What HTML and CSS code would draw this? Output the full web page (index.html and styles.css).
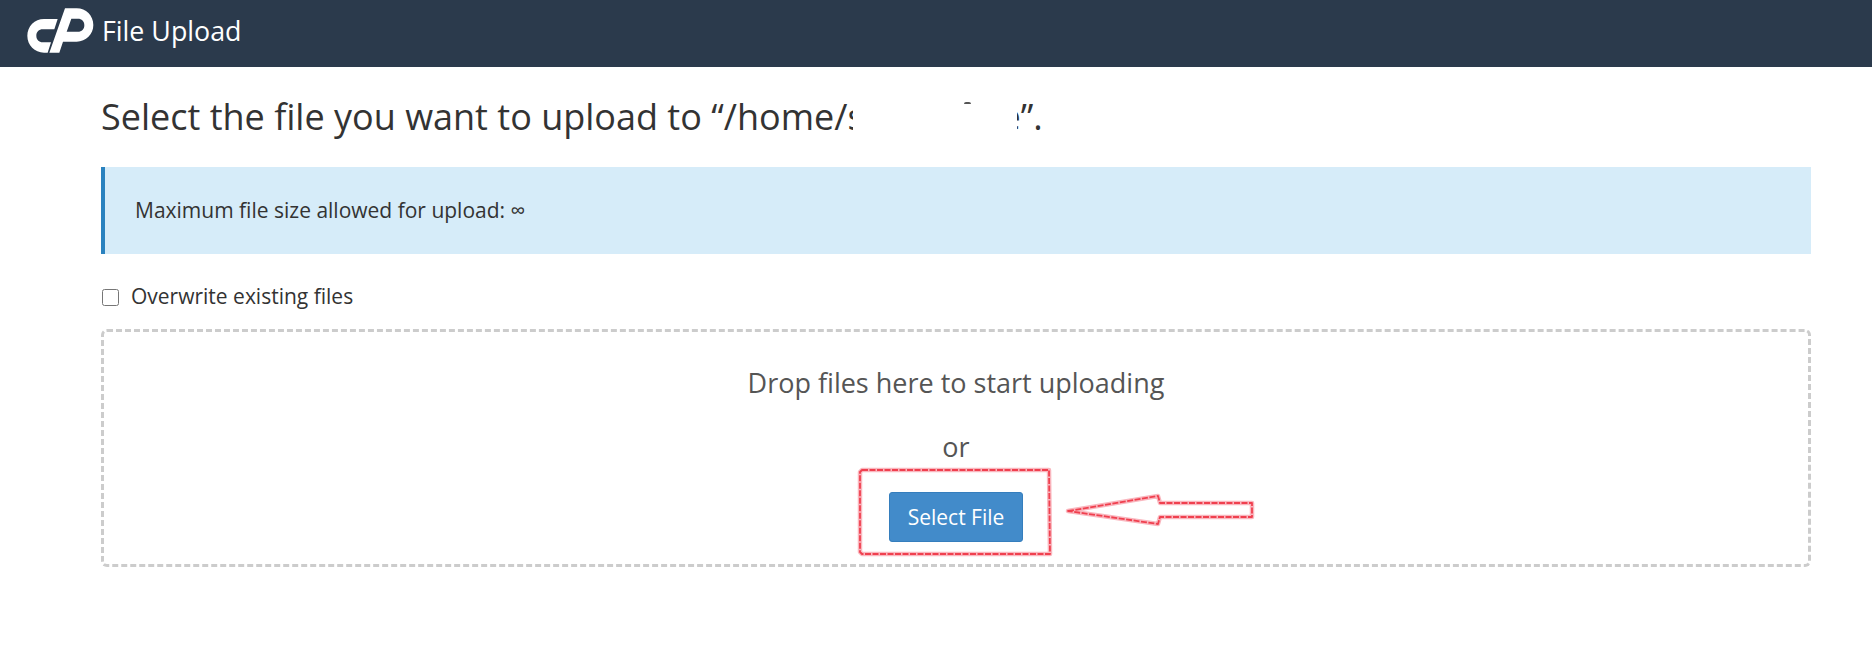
FILE: index.html
```html
<!DOCTYPE html>
<html lang="en">
<head>
<meta charset="utf-8">
<title>File Upload</title>
<link rel="stylesheet" href="styles.css">
</head>
<body>
<header class="topbar">
  <svg class="logo" viewBox="0 0 240 180" aria-hidden="true">
    <path fill="#fff" d="M72 57H113L103 88H68C57 88 49 96 49 107.500C49 119 57 127 68 127H93L83 158H72C44 158 22 136 22 107.500C22 79 44 57 72 57Z"/>
    <path fill="#fff" fill-rule="evenodd" d="M135 25H170C198 25 220 47 220 75C220 103 198 125 170 125H129L118 158H88ZM154 56L140 95H174C185 95 193 87 193 75.500C193 64 185 56 174 56Z"/>
  </svg>
  <span class="topbar-title">File Upload</span>
</header>
<main class="content">
  <h1 class="heading">Select the file you want to upload to “/home/s<span class="redact"><span class="redact-mark"></span></span>e”.</h1>
  <div class="notice">Maximum file size allowed for upload: ∞</div>
  <label class="overwrite"><input type="checkbox" class="check"><span>Overwrite existing files</span></label>
  <section class="dropzone">
    <p class="drop-title">Drop files here to start uploading</p>
    <p class="drop-or">or</p>
    <button class="select-btn" type="button">Select File</button>
  </section>
</main>
<svg class="annotation" viewBox="0 0 1872 664" aria-hidden="true">
  <g fill="none" stroke-linejoin="round">
    <g stroke="#f9b6be" stroke-width="4.5">
      <path d="M862 470H1049L1050 554H862L860 552V472Z"/>
      <path d="M1068 511L1158 496L1160 503L1252 503L1252 517L1160 517L1158 524Z"/>
    </g>
    <g stroke="#f0404f" stroke-width="1.8" stroke-dasharray="6 1.5">
      <path d="M862 470H1049L1050 554H862L860 552V472Z"/>
      <path d="M1068 511L1158 496L1160 503L1252 503L1252 517L1160 517L1158 524Z"/>
    </g>
  </g>
</svg>
</body>
</html>
```
FILE: styles.css
```css
* { box-sizing: border-box; }
html, body { margin: 0; height: 100%; }
body {
  font-family: "Open Sans", "Noto Sans", sans-serif;
  color: #333;
  background: #fff;
  overflow: hidden;
}
.topbar {
  height: 67px;
  background: #2b3a4c;
  display: flex;
  align-items: flex-start;
  padding-left: 20px;
  gap: 2px;
}
.logo { width: 80px; height: 60px; flex: none; }
.topbar-title { color: #fff; font-size: 26.8px; line-height: 36px; margin-top: 13px; }
.content { padding: 0 61px 0 101px; }
.heading {
  margin: 25px 0 0;
  font-size: 36px;
  font-weight: 400;
  line-height: 49px;
  white-space: nowrap;
}
.redact {
  display: inline-block;
  position: relative;
  width: 136px;
  height: 40px;
  vertical-align: middle;
}
.redact::before {
  content: "";
  position: absolute;
  left: -12px;
  right: -16px;
  top: 0;
  height: 40px;
  background: #fff;
}
.redact-mark {
  position: absolute;
  left: 99px;
  top: 2px;
  width: 7px;
  height: 2px;
  background: #555;
  border-radius: 3px 3px 0 0;
}
.notice {
  margin-top: 26px;
  height: 87px;
  background: #d6ecf9;
  border-left: 4px solid #2a82bf;
  padding: 0 0 2px 30px;
  display: flex;
  align-items: center;
  font-size: 21px;
}
.overwrite {
  display: flex;
  align-items: center;
  margin-top: 27px;
  height: 30px;
  font-size: 21px;
  gap: 12px;
}
.check {
  margin: 2px 0 0 1px;
  width: 17px;
  height: 17px;
  flex: none;
}
.dropzone {
  margin-top: 18px;
  height: 238px;
  border: 3px dashed #ccc;
  border-radius: 6px;
  display: flex;
  flex-direction: column;
  align-items: center;
  color: #555;
}
.drop-title { margin: 33px 0 0; font-size: 27px; line-height: 36px; }
.drop-or { margin: 28px 0 0; font-size: 27px; line-height: 36px; }
.select-btn {
  margin-top: 27px;
  width: 134px;
  height: 50px;
  background: #428bca;
  border: 1px solid #357ebd;
  border-radius: 3px;
  color: #fff;
  font: 400 21px "Open Sans", sans-serif;
  padding: 0;
}
.annotation { position: absolute; left: 0; top: 0; width: 1872px; height: 664px; pointer-events: none; }
```
